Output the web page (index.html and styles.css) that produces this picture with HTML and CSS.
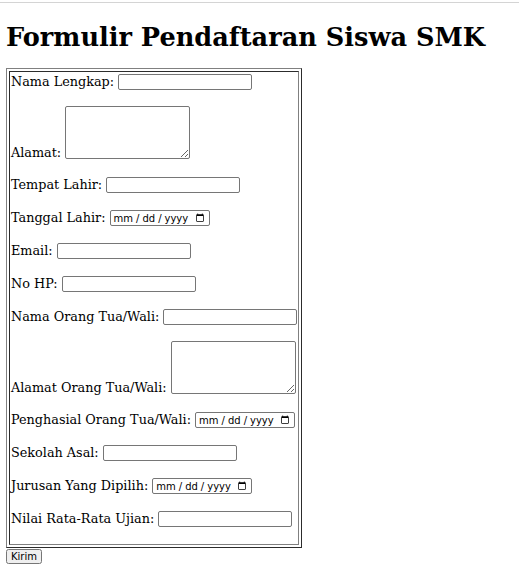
FILE: index.html
```html
<!DOCTYPE html>
<html lang="id">
<head>
<meta charset="utf-8">
<title>Formulir Pendaftaran Siswa SMK</title>
<link rel="stylesheet" href="styles.css">
</head>
<body class="page">
<h1 class="title">Formulir Pendaftaran Siswa SMK</h1>
<form class="form">
<table class="frame">
<tr><td class="cell">
<label class="lbl">Nama Lengkap:</label> <input class="txt" type="text"><br><br>
<label class="lbl">Alamat:</label> <textarea class="area"></textarea><br><br>
<label class="lbl">Tempat Lahir:</label> <input class="txt" type="text"><br><br>
<label class="lbl">Tanggal Lahir:</label> <input class="date" type="date"><br><br>
<label class="lbl">Email:</label> <input class="txt" type="email"><br><br>
<label class="lbl">No HP:</label> <input class="txt" type="text"><br><br>
<label class="lbl">Nama Orang Tua/Wali:</label> <input class="txt" type="text"><br><br>
<label class="lbl">Alamat Orang Tua/Wali:</label> <textarea class="area"></textarea><br><br>
<label class="lbl">Penghasial Orang Tua/Wali:</label> <input class="date" type="date"><br><br>
<label class="lbl">Sekolah Asal:</label> <input class="txt" type="text"><br><br>
<label class="lbl">Jurusan Yang Dipilih:</label> <input class="date" type="date"><br><br>
<label class="lbl">Nilai Rata-Rata Ujian:</label> <input class="txt" type="text"><br><br>
</td></tr>
</table>
<input class="btn" type="submit" value="Kirim">
</form>
</body>
</html>
```
FILE: styles.css
```css
html {
  background: linear-gradient(to bottom, #fff 0, #fff 2px, #d4d4d4 2px, #d4d4d4 3px, #fff 3px) no-repeat;
  background-color: #fff;
}
.page {
  margin: 8px 6px;
  font-family: "DejaVu Serif", serif;
  font-size: 12.8px;
  color: #000;
}
.title {
  font-size: 25.6px;
  font-weight: bold;
  margin: 14px 0 16px;
}
.form {
  margin: 0;
}
.frame {
  border: 1px outset #808080;
  border-spacing: 2px;
}
.cell {
  border: 1px inset #808080;
  padding: 1px;
}
.txt {
  box-sizing: border-box;
  width: 134px;
  height: 16px;
  padding: 1px 2px;
  margin: 1px 0;
  border: 1px solid #767676;
  border-radius: 2px;
  font-size: 11px;
}
.area {
  box-sizing: border-box;
  width: 125px;
  height: 53px;
  margin: 0 0 2px;
  vertical-align: -4px;
  border: 1px solid #767676;
  border-radius: 2px;
  font-size: 11px;
}
.date {
  box-sizing: border-box;
  width: 100px;
  height: 16px;
  padding: 0 2px;
  margin: 1px 0;
  border: 1px solid #767676;
  border-radius: 2px;
  font-family: "DejaVu Sans", sans-serif;
  font-size: 10px;
}
.date::-webkit-datetime-edit-text {
  padding: 0 2px;
}
.btn {
  font-family: "DejaVu Sans", sans-serif;
  font-size: 10px;
  padding: 0 3px;
  margin: 0;
}
```
